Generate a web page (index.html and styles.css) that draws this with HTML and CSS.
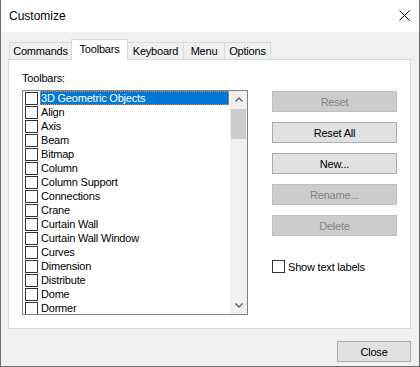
FILE: index.html
```html
<!DOCTYPE html>
<html lang="en">
<head>
  <meta charset="UTF-8">
  <title>Customize</title>
  <link rel="stylesheet" href="styles.css">
</head>
<body>
  <div class="dialog">
    <div class="titlebar">
      <span class="title">Customize</span>
      <svg class="close-x" width="11" height="11" viewBox="0 0 11 11">
        <path d="M0.5 0.5 L10.5 10.5 M10.5 0.5 L0.5 10.5" stroke="#000" stroke-width="1" fill="none"/>
      </svg>
    </div>

    <div class="main">
      <div class="tabs">
        <div class="tab tab-commands">Commands</div>
        <div class="tab tab-toolbars selected">Toolbars</div>
        <div class="tab tab-keyboard">Keyboard</div>
        <div class="tab tab-menu">Menu</div>
        <div class="tab tab-options">Options</div>
      </div>

      <div class="panel">
        <div class="list-column">
          <div class="list-label">Toolbars:</div>
          <div class="listbox">
            <div class="items">
              <div class="item selected"><span class="check"></span><span class="name">3D Geometric Objects</span></div>
              <div class="item"><span class="check"></span><span class="name">Align</span></div>
              <div class="item"><span class="check"></span><span class="name">Axis</span></div>
              <div class="item"><span class="check"></span><span class="name">Beam</span></div>
              <div class="item"><span class="check"></span><span class="name">Bitmap</span></div>
              <div class="item"><span class="check"></span><span class="name">Column</span></div>
              <div class="item"><span class="check"></span><span class="name">Column Support</span></div>
              <div class="item"><span class="check"></span><span class="name">Connections</span></div>
              <div class="item"><span class="check"></span><span class="name">Crane</span></div>
              <div class="item"><span class="check"></span><span class="name">Curtain Wall</span></div>
              <div class="item"><span class="check"></span><span class="name">Curtain Wall Window</span></div>
              <div class="item"><span class="check"></span><span class="name">Curves</span></div>
              <div class="item"><span class="check"></span><span class="name">Dimension</span></div>
              <div class="item"><span class="check"></span><span class="name">Distribute</span></div>
              <div class="item"><span class="check"></span><span class="name">Dome</span></div>
              <div class="item"><span class="check"></span><span class="name">Dormer</span></div>
            </div>
            <div class="scrollbar">
              <div class="arrow">
                <svg width="8" height="5" viewBox="0 0 8 5"><path d="M0.5 4.5 L4 1 L7.5 4.5" stroke="#606060" stroke-width="1.4" fill="none"/></svg>
              </div>
              <div class="thumb"></div>
              <div class="track"></div>
              <div class="arrow">
                <svg width="8" height="5" viewBox="0 0 8 5"><path d="M0.5 0.5 L4 4 L7.5 0.5" stroke="#606060" stroke-width="1.4" fill="none"/></svg>
              </div>
            </div>
          </div>
        </div>

        <div class="button-column">
          <button class="btn" disabled>Reset</button>
          <button class="btn">Reset All</button>
          <button class="btn">New...</button>
          <button class="btn" disabled>Rename...</button>
          <button class="btn" disabled>Delete</button>
          <label class="option">
            <span class="check"></span>
            <span>Show text labels</span>
          </label>
        </div>
      </div>

      <div class="footer">
        <button class="btn close-btn">Close</button>
      </div>
    </div>
  </div>
</body>
</html>
```

FILE: styles.css
```css
body {
  margin: 0;
  background: #fff;
  font-family: "Liberation Sans", Arial, sans-serif;
  font-size: 11px;
  color: #000;
}
.dialog {
  width: 420px;
  height: 367px;
  box-sizing: border-box;
  border: 1px solid #6f6f6f;
  border-top: none;
  display: flex;
  flex-direction: column;
}
.titlebar {
  height: 31px;
  flex: none;
  background: #fff;
  display: flex;
  align-items: center;
  justify-content: space-between;
  padding: 0 9px 1px 8px;
}
.title {
  font-size: 12px;
}
.close-x {
  display: block;
}
.main {
  flex: 1;
  background: #f0f0f0;
  padding: 7px 8px 0 7px;
}
.tabs {
  display: flex;
  align-items: flex-end;
  height: 20px;
  padding-left: 1px;
}
.tab {
  box-sizing: border-box;
  height: 17px;
  border: 1px solid #d9d9d9;
  border-bottom: none;
  background: #f0f0f0;
  text-align: center;
  line-height: 16px;
  letter-spacing: -0.2px;
  margin-left: -1px;
}
.tab:first-child {
  margin-left: 0;
}
.tab.selected {
  height: 21px;
  margin-bottom: -1px;
  background: #fff;
  position: relative;
  z-index: 1;
  line-height: 18px;
}
.tab-commands { width: 63px; }
.tab-toolbars { width: 57px; }
.tab-keyboard { width: 57px; }
.tab-menu { width: 42px; }
.tab-options { width: 47px; }
.panel {
  box-sizing: border-box;
  height: 270px;
  border: 1px solid #d9d9d9;
  background: #fff;
  display: flex;
  padding: 11px 13px 0 13px;
}
.list-column {
  width: 226px;
}
.list-label {
  line-height: 14px;
  letter-spacing: -0.2px;
}
.listbox {
  box-sizing: border-box;
  margin-top: 5px;
  height: 225px;
  border: 1px solid #828282;
  display: flex;
}
.items {
  flex: 1;
  overflow: hidden;
}
.item {
  display: flex;
  height: 14px;
  letter-spacing: -0.2px;
}
.check {
  box-sizing: border-box;
  width: 13px;
  height: 13px;
  border: 1px solid #333;
  background: #fff;
  flex: none;
}
.item .check {
  margin: 1px 2px 0 2px;
}
.name {
  flex: 1;
  line-height: 14px;
  padding-left: 1px;
  margin-right: 1px;
  white-space: nowrap;
}
.item.selected .name {
  box-sizing: border-box;
  height: 14px;
  line-height: 12px;
  background: #0078d7;
  color: #fff;
  border: 1px dotted #ff8728;
  padding-left: 0;
}
.scrollbar {
  width: 17px;
  flex: none;
  background: #f0f0f0;
  display: flex;
  flex-direction: column;
}
.arrow {
  height: 17px;
  display: flex;
  align-items: center;
  justify-content: center;
  flex: none;
}
.arrow svg {
  display: block;
}
.thumb {
  height: 30px;
  margin: 1px 1px 0 1px;
  background: #cdcdcd;
  flex: none;
}
.track {
  flex: 1;
}
.button-column {
  margin-left: 24px;
  padding-top: 20px;
  width: 125px;
  display: flex;
  flex-direction: column;
  gap: 10px;
}
.btn {
  box-sizing: border-box;
  height: 21px;
  width: 125px;
  border: 1px solid #adadad;
  background: #e1e1e1;
  font-family: "Liberation Sans", Arial, sans-serif;
  font-size: 11px;
  letter-spacing: -0.2px;
  color: #000;
  padding: 0;
}
.btn:disabled {
  background: #cccccc;
  border-color: #bfbfbf;
  color: #838383;
}
.option {
  display: flex;
  align-items: center;
  gap: 3px;
  margin-top: 14px;
  letter-spacing: -0.2px;
}
.footer {
  display: flex;
  justify-content: flex-end;
  padding-top: 12px;
}
.close-btn {
  width: 74px;
}
```
